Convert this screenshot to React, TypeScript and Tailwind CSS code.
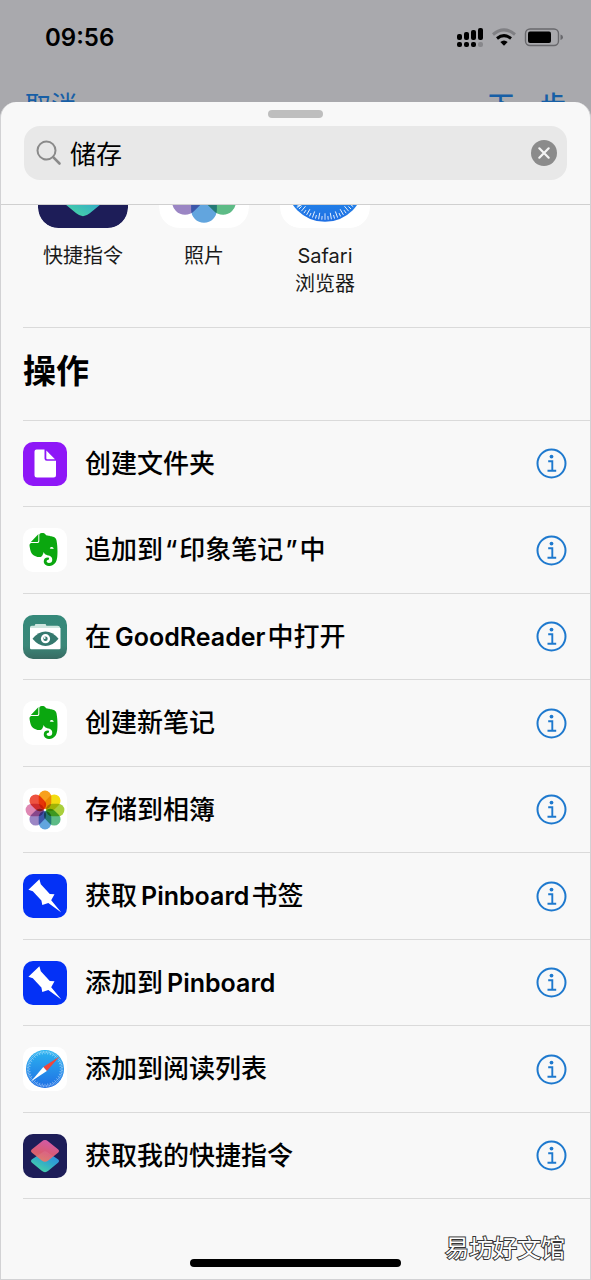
import React, { useId } from "react";
import { SiEvernote } from "react-icons/si";

function FolderIcon() {
  return (
    <svg viewBox="0 0 44 44" className="w-full h-full">
      <rect width="44" height="44" rx="10" fill="#8e17f7" />
      <path
        d="M13.5 7.5H21.5V16.5Q21.5 18.8 23.8 18.8H33V33Q33 35.5 30.5 35.5H14Q11.5 35.5 11.5 33V9.5Q11.5 7.5 13.5 7.5Z"
        fill="#fff"
      />
      <path d="M23.3 8.6L32 17.2H24.2Q23.3 17.2 23.3 16.3Z" fill="#fff" />
    </svg>
  );
}

function EvernoteIcon() {
  return (
    <div className="flex items-center justify-center w-full h-full pr-1 pb-0.5 bg-white rounded-[10px]">
      <SiEvernote size={33} color="#0aa70f" />
    </div>
  );
}

function GoodReaderIcon() {
  const id = useId();
  return (
    <svg viewBox="0 0 44 44" className="w-full h-full">
      <defs>
        <linearGradient id={id} x1="0" y1="0" x2="0" y2="1">
          <stop offset="0" stopColor="#35897a" />
          <stop offset="0.7" stopColor="#3b8778" />
          <stop offset="1" stopColor="#386b63" />
        </linearGradient>
      </defs>
      <rect width="44" height="44" rx="10" fill={`url(#${id})`} />
      <path
        d="M7 12.5Q7 10.8 8.7 10.8H11.6L12.4 9H22.6L23.4 10.8H34.5Q36.8 10.8 37 12.5V13H7Z"
        fill="#cfe6df"
      />
      <path d="M7 13H37.5V33Q37.5 34.3 36.2 34.3H8.2Q7 34.3 7 33Z" fill="#fff" />
      <path d="M9.5 23.7Q15.5 16.4 22.5 16.4T35.5 23.7Q29.5 31 22.5 31T9.5 23.7Z" fill="#35796e" />
      <circle cx="22.5" cy="23.7" r="4.6" fill="#fff" />
      <circle cx="22.5" cy="23.7" r="2.2" fill="#35796e" />
      <circle cx="21.7" cy="23" r="0.9" fill="#fff" />
    </svg>
  );
}

const petals = [
  "#f8a01c",
  "#f2dc12",
  "#a9cf3c",
  "#5dbb86",
  "#62a5de",
  "#9b86c4",
  "#de87b3",
  "#ee5340",
];

function PhotosIcon() {
  return (
    <svg viewBox="0 0 44 44" className="w-full h-full isolate">
      <rect width="44" height="44" rx="10" fill="#fff" />
      {petals.map((color, i) => (
        <rect
          key={color}
          x="15.7"
          y="2.6"
          width="12.6"
          height="18.4"
          rx="6.3"
          fill={color}
          className="mix-blend-multiply"
          transform={`rotate(${i * 45} 22 22)`}
        />
      ))}
    </svg>
  );
}

function PinboardIcon() {
  return (
    <svg viewBox="0 0 44 44" className="w-full h-full">
      <rect width="44" height="44" rx="10" fill="#0431f6" />
      <path
        d="M16.4 5.3L17.8 10.3L26.8 20L31.5 20.3L28.2 26.3L38.3 38.6L25.3 29L19.3 31L18.4 26.6L9.8 17.3L5.4 15.7Z"
        fill="#fff"
      />
    </svg>
  );
}

function SafariIcon() {
  const id = useId();
  return (
    <svg viewBox="0 0 44 44" className="w-full h-full">
      <defs>
        <linearGradient id={id} x1="0" y1="0" x2="0" y2="1">
          <stop offset="0" stopColor="#2cb4f0" />
          <stop offset="1" stopColor="#1f6fe4" />
        </linearGradient>
      </defs>
      <rect width="44" height="44" rx="10" fill="#fff" />
      <circle cx="22" cy="22" r="19" fill={`url(#${id})`} />
      {Array.from({ length: 72 }, (_, i) => (
        <line
          key={i}
          x1="22"
          y1="4"
          x2="22"
          y2={i % 2 ? 5.8 : 7.2}
          stroke="#fff"
          strokeWidth="0.4"
          transform={`rotate(${i * 5} 22 22)`}
        />
      ))}
      <path d="M36.5 9.5L20.3 20L23.8 24Z" fill="#f0463c" />
      <path d="M8 34.5L20.3 20L23.8 24Z" fill="#fff" />
    </svg>
  );
}

function ShortcutsIcon() {
  const id = useId();
  return (
    <svg viewBox="0 0 44 44" className="w-full h-full">
      <defs>
        <linearGradient id={`${id}a`} x1="0.7" y1="0" x2="0.3" y2="1">
          <stop offset="0" stopColor="#e661b4" />
          <stop offset="0.6" stopColor="#ee6275" />
          <stop offset="1" stopColor="#f07a62" />
        </linearGradient>
        <linearGradient id={`${id}b`} x1="1" y1="0" x2="0.3" y2="1">
          <stop offset="0" stopColor="#2f7fe8" />
          <stop offset="0.5" stopColor="#2fa5cf" />
          <stop offset="1" stopColor="#48d3a4" />
        </linearGradient>
      </defs>
      <rect width="44" height="44" rx="10" fill="#1d1d58" />
      <path
        d="M20 17.9Q22 16.5 24 17.9L35.3 25.6Q37 27.1 35.3 28.6L25.3 36.8Q22 39.6 18.7 36.8L8.700 28.6Q7 27.1 8.7 25.6Z"
        fill={`url(#${id}b)`}
      />
      <path
        d="M18.7 7.4Q22 4.6 25.3 7.4L35.3 15.4Q37 16.9 35.3 18.4L25.3 26.4Q22 29.2 18.7 26.4L8.7 18.4Q7 16.9 8.7 15.4Z"
        fill={`url(#${id}a)`}
        fillOpacity="0.9"
      />
    </svg>
  );
}

function InfoIcon() {
  return (
    <svg viewBox="0 0 31 31" className="w-[31px] h-[31px]" fill="none" stroke="#1e79ce">
      <circle cx="15.5" cy="15.5" r="14" strokeWidth="2" />
      <circle cx="15.5" cy="8.6" r="1.9" fill="#1e79ce" stroke="none" />
      <path d="M12.2 13.3H16.3V22.7M11.5 22.8H20.2" strokeWidth="1.9" />
    </svg>
  );
}

function StatusIcons() {
  return (
    <svg viewBox="0 0 108 22" className="w-[108px] h-[22px]">
      <rect x="1" y="7" width="5" height="6" rx="2" />
      <rect x="8" y="5" width="5" height="8" rx="2" />
      <rect x="15" y="3" width="5" height="10" rx="2" />
      <rect x="22" y="1" width="5" height="12" rx="2" />
      <rect x="1" y="15" width="5" height="5" rx="2" />
      <rect x="8" y="15" width="5" height="5" rx="2" />
      <rect x="15" y="15" width="5" height="5" rx="2" />
      <rect x="22" y="15" width="5" height="5" rx="2" fill="#88888c" />
      <g fill="none" strokeWidth="3">
        <path d="M37 7.5Q48 -1.8 59 7.5" stroke="#808084" />
        <path d="M41 11.5Q48 5.8 55 11.5" stroke="#000" />
      </g>
      <path d="M44.3 15Q48 12 51.7 15L48 18.8Z" />
      <rect x="69.500" y="2" width="33" height="16.500" rx="4.500" fill="none" stroke="#68686c" strokeWidth="1.4" />
      <rect x="72" y="4.500" width="23" height="11.500" rx="2" />
      <path d="M104.500 7.500Q107 8 107 10.200T104.500 13Z" fill="#68686c" />
    </svg>
  );
}

const apps = [
  { label: "快捷指令", Icon: ShortcutsIcon },
  { label: "照片", Icon: PhotosIcon },
  { label: "Safari 浏览器", Icon: SafariIcon },
];

const actions = [
  { title: "创建文件夹", Icon: FolderIcon },
  { title: "追加到“印象笔记”中", Icon: EvernoteIcon },
  { title: "在GoodReader中打开", Icon: GoodReaderIcon },
  { title: "创建新笔记", Icon: EvernoteIcon },
  { title: "存储到相簿", Icon: PhotosIcon },
  { title: "获取Pinboard书签", Icon: PinboardIcon },
  { title: "添加到Pinboard", Icon: PinboardIcon },
  { title: "添加到阅读列表", Icon: SafariIcon },
  { title: "获取我的快捷指令", Icon: ShortcutsIcon },
];

// Latin words and quotes get a little air next to the Chinese text
function Title({ text }: { text: string }) {
  return (
    <p className="flex-1 ml-[18px] text-[26px] leading-9 font-medium">
      {text.split(/([A-Za-z]+|[“”])/).map((part, i) => {
        if (/[A-Za-z]/.test(part)) {
          return (
            <span key={i} className="ml-1 mr-0.5 text-[25px] font-semibold">
              {part}
            </span>
          );
        }
        if (/[“”]/.test(part)) {
          return (
            <span key={i} className="mx-0.5">
              {part}
            </span>
          );
        }
        return part;
      })}
    </p>
  );
}

function App() {
  return (
    <div className="flex flex-col min-h-screen bg-[#a9a9ad] text-black font-['Inter','Noto_Sans_CJK_SC',sans-serif]">
      <header className="h-[102px] overflow-hidden">
        <div className="flex items-center justify-between h-[76px] pl-[45px] pr-[27px]">
          <div className="text-2xl font-semibold">09:56</div>
          <StatusIcons />
        </div>
        <nav className="flex justify-between px-[25px] pt-4 text-[26px] leading-7 text-[#175fa6]">
          <button>取消</button>
          <button className="font-medium">下一步</button>
        </nav>
      </header>
      <main className="relative flex flex-col flex-1 bg-[#f8f8f8] border border-t-0 border-[#d2d2d4] rounded-t-2xl">
        <div className="px-[23px] pt-2 pb-6 border-b border-[#d0d0d0]">
          <div className="w-[55px] h-2 mx-auto mb-2 rounded-full bg-[#bebebe]" />
          <div className="flex items-center h-[54px] pl-3 pr-2.5 rounded-2xl bg-[#e8e8e8]">
            <svg viewBox="0 0 26 26" className="w-[26px] h-[26px] shrink-0" fill="none" stroke="#8a8a8a" strokeLinecap="round">
              <circle cx="10.5" cy="10.5" r="9" strokeWidth="2" />
              <path d="M17.2 17.2L23.5 23.5" strokeWidth="2.6" />
            </svg>
            <input
              type="text"
              aria-label="搜索"
              defaultValue="储存"
              className="flex-1 min-w-0 ml-2 pt-1 text-[26px] leading-8 bg-transparent outline-none"
            />
            <button aria-label="清除" className="shrink-0">
              <svg viewBox="0 0 26 26" className="w-[26px] h-[26px]">
                <circle cx="13" cy="13" r="13" fill="#8b8b8b" />
                <path d="M8.3 8.3L17.7 17.7M17.7 8.3L8.3 17.7" stroke="#f4f4f4" strokeWidth="2.2" strokeLinecap="round" />
              </svg>
            </button>
          </div>
        </div>
        <section className="flex gap-[31px] pl-[37px] pb-[29px] overflow-hidden">
          {apps.map(({ label, Icon }) => (
            <div key={label} className="w-[90px] -mt-[67px]">
              <div className="w-[90px] h-[90px] rounded-[20px] overflow-hidden">
                <Icon />
              </div>
              <p className="mt-3.5 text-xl leading-7 text-center text-[#1a1a1a]">
                {label.split(" ").map((line) => (
                  <span key={line} className="block">
                    {line}
                  </span>
                ))}
              </p>
            </div>
          ))}
        </section>
        <section className="ml-[22px] border-t border-[#dadada]">
          <h2 className="pt-[23px] pb-[29px] text-[33px] leading-10 font-bold">操作</h2>
          <ul className="border-t border-[#dadada]">
            {actions.map(({ title, Icon }) => (
              <li
                key={title}
                className="flex items-center h-[86px] even:h-[87px] pr-[23px] border-b border-[#dadada]"
              >
                <div className="w-11 h-11 shrink-0">
                  <Icon />
                </div>
                <Title text={title} />
                <button aria-label="详细信息">
                  <InfoIcon />
                </button>
              </li>
            ))}
          </ul>
        </section>
        <footer className="flex flex-col justify-end flex-1 pt-[60px] pb-3">
          <div className="w-[211px] h-2 mx-auto rounded-full bg-black" />
        </footer>
        <div className="absolute bottom-3.5 right-[25px] text-2xl leading-8 text-white [-webkit-text-stroke:2px_#333] [paint-order:stroke_fill]">
          易坊好文馆
        </div>
      </main>
    </div>
  );
}

export default App;
